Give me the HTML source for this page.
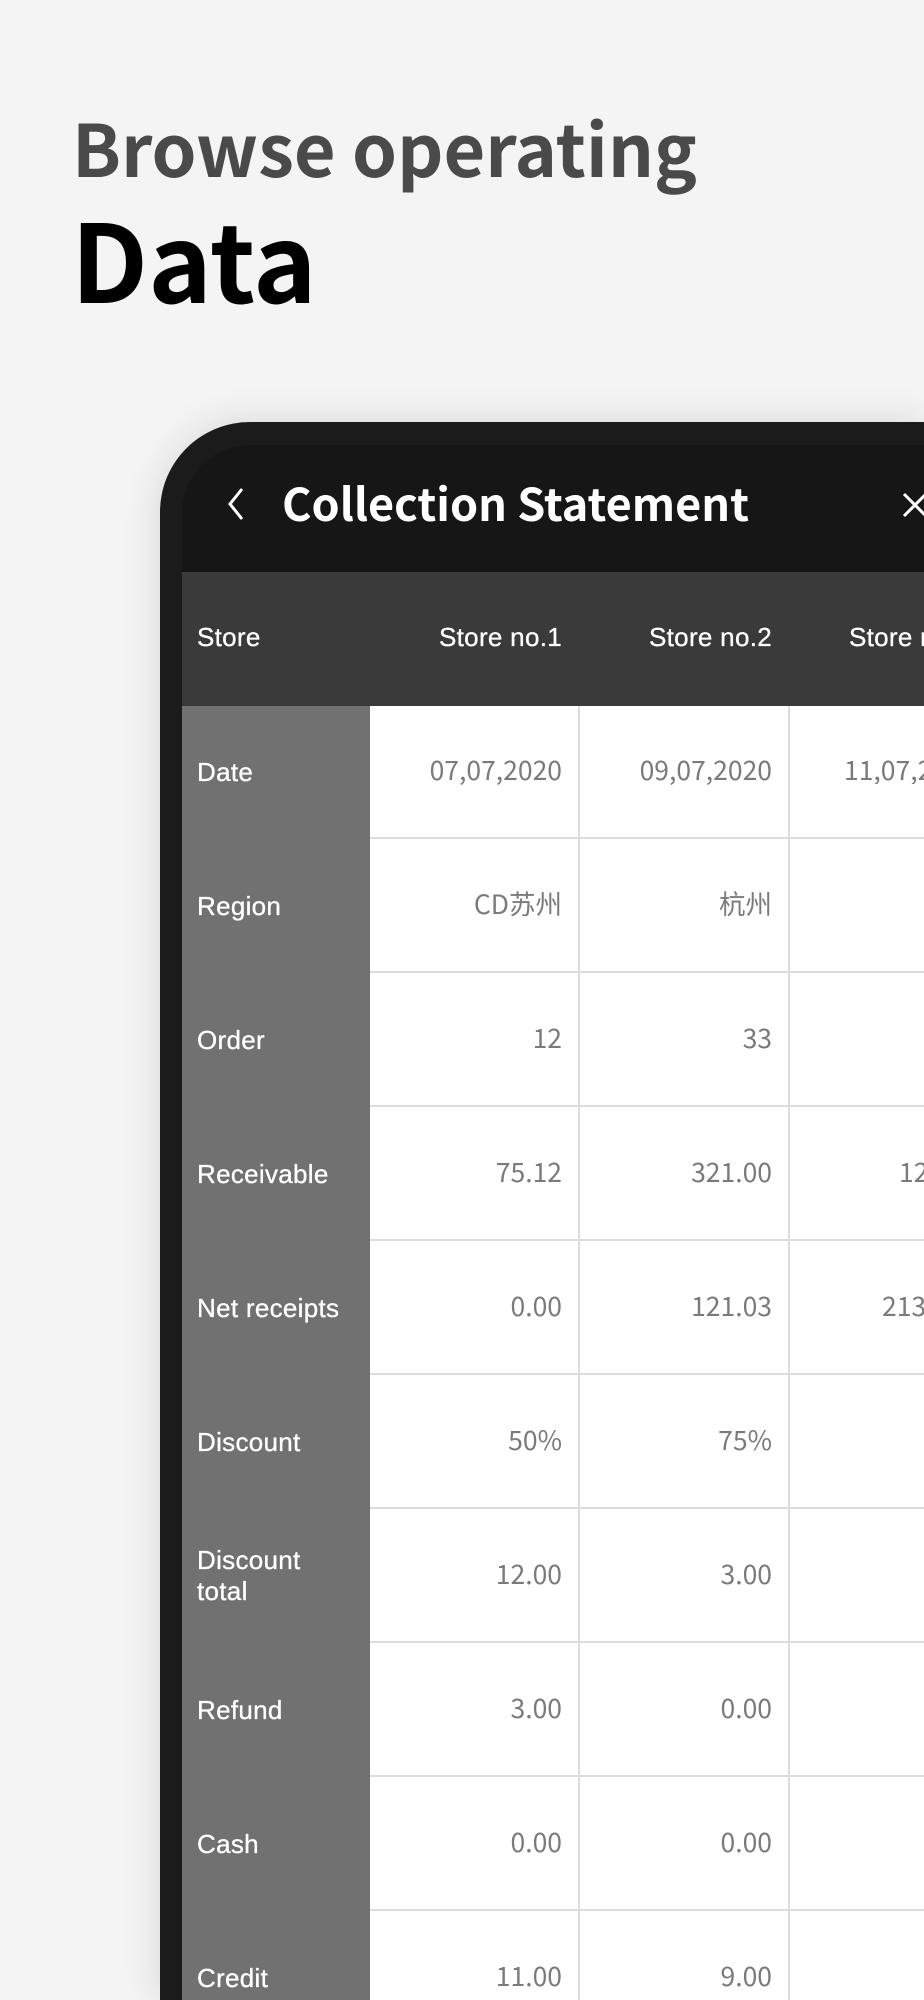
<!DOCTYPE html>
<html><head><meta charset="utf-8">
<style>
*{margin:0;padding:0;box-sizing:border-box}
html,body{width:924px;height:2000px;overflow:hidden;background:#f4f4f4;font-family:"Liberation Sans",sans-serif}
#w{position:relative;width:924px;height:2000px;overflow:hidden}
.h1{position:absolute;left:72px;top:96px;font-family:"Noto Sans CJK SC",sans-serif;font-weight:700;font-size:72px;color:#4a4a4a;line-height:100px;white-space:nowrap}
.h2{position:absolute;left:71px;top:187px;font-family:"Noto Sans CJK SC",sans-serif;font-weight:700;font-size:108px;color:#000;line-height:140px}
.frame{position:absolute;left:160px;top:422px;width:764px;height:1578px;background:#1b1b1b;border-radius:90px 0 0 0;box-shadow:0 0 40px rgba(0,0,0,0.12)}
.screen{position:absolute;left:182px;top:445px;width:742px;height:1555px;background:#161616;border-radius:68px 0 0 0}
.title{position:absolute;left:282px;top:470px;font-family:"Noto Sans CJK SC",sans-serif;font-weight:700;font-size:45px;color:#fff;line-height:64px;white-space:nowrap}
.hdr{position:absolute;left:182px;top:572px;width:742px;height:134px;background:#3a3a3a}
.lcol{position:absolute;left:182px;top:706px;width:188px;height:1294px;background:#717171}
.body{position:absolute;left:370px;top:706px;width:554px;height:1294px;background:#fff}
.vl{position:absolute;top:706px;width:2px;height:1294px;background:#dcdcdc}
.hl{position:absolute;left:370px;width:554px;height:2px;background:#dcdcdc}
.lab{position:absolute;left:197px;color:#fff;font-size:26px;letter-spacing:0.3px;line-height:31px;-webkit-text-stroke:0.3px #fff}
.hv{position:absolute;color:#fff;font-size:26px;letter-spacing:0.3px;line-height:30px;text-align:right;width:220px;white-space:nowrap;-webkit-text-stroke:0.3px #fff}
.v{position:absolute;color:#7a7a7a;font-family:"Noto Sans CJK SC",sans-serif;font-weight:400;font-size:26.5px;line-height:30px;text-align:right;width:200px;white-space:nowrap}
</style></head><body><div id="w">
<div class="h1">Browse operating</div>
<div class="h2">Data</div>
<div class="frame"></div>
<div class="screen"></div>
<svg style="position:absolute;left:222px;top:486px" width="30" height="36" viewBox="0 0 30 36"><path d="M20 3 L8 18 L20 33" fill="none" stroke="#fff" stroke-width="3"/></svg>
<div class="title">Collection Statement</div>
<svg style="position:absolute;left:900px;top:490px" width="24" height="30" viewBox="0 0 24 30"><path d="M4 4 L26 26 M26 4 L4 26" fill="none" stroke="#fff" stroke-width="3"/></svg>
<div class="hdr"></div>
<div class="lab" style="top:622px">Store</div>
<div class="hv" style="left:342px;top:622px">Store no.1</div>
<div class="hv" style="left:552px;top:622px">Store no.2</div>
<div class="hv" style="top:622px;text-align:left;left:849px;width:75px;overflow:hidden">Store no.3</div>
<div class="lcol"></div>
<div class="body"></div>
<div class="vl" style="left:578px"></div>
<div class="vl" style="left:788px"></div>
<div class="hl" style="top:837px"></div>
<div class="hl" style="top:971px"></div>
<div class="hl" style="top:1105px"></div>
<div class="hl" style="top:1239px"></div>
<div class="hl" style="top:1373px"></div>
<div class="hl" style="top:1507px"></div>
<div class="hl" style="top:1641px"></div>
<div class="hl" style="top:1775px"></div>
<div class="hl" style="top:1909px"></div>

<div class="lab" style="top:757px">Date</div>
<div class="lab" style="top:891px">Region</div>
<div class="lab" style="top:1025px">Order</div>
<div class="lab" style="top:1159px">Receivable</div>
<div class="lab" style="top:1293px">Net receipts</div>
<div class="lab" style="top:1427px">Discount</div>
<div class="lab" style="top:1545px">Discount<br>total</div>
<div class="lab" style="top:1695px">Refund</div>
<div class="lab" style="top:1829px">Cash</div>
<div class="lab" style="top:1963px">Credit</div>

<div class="v" style="left:362px;top:754px">07,07,2020</div>
<div class="v" style="left:572px;top:754px">09,07,2020</div>
<div class="v" style="left:782px;top:754px;width:142px;text-align:left;padding-left:62px;overflow:hidden">11,07,2020</div>
<div class="v" style="left:362px;top:888px">CD苏州</div>
<div class="v" style="left:572px;top:888px">杭州</div>
<div class="v" style="left:362px;top:1022px">12</div>
<div class="v" style="left:572px;top:1022px">33</div>
<div class="v" style="left:362px;top:1156px">75.12</div>
<div class="v" style="left:572px;top:1156px">321.00</div>
<div class="v" style="left:899px;top:1156px;text-align:left;width:25px;overflow:hidden">123.00</div>
<div class="v" style="left:362px;top:1290px">0.00</div>
<div class="v" style="left:572px;top:1290px">121.03</div>
<div class="v" style="left:882px;top:1290px;text-align:left;width:42px;overflow:hidden">2133.00</div>
<div class="v" style="left:362px;top:1424px">50%</div>
<div class="v" style="left:572px;top:1424px">75%</div>
<div class="v" style="left:362px;top:1558px">12.00</div>
<div class="v" style="left:572px;top:1558px">3.00</div>
<div class="v" style="left:362px;top:1692px">3.00</div>
<div class="v" style="left:572px;top:1692px">0.00</div>
<div class="v" style="left:362px;top:1826px">0.00</div>
<div class="v" style="left:572px;top:1826px">0.00</div>
<div class="v" style="left:362px;top:1960px">11.00</div>
<div class="v" style="left:572px;top:1960px">9.00</div>
</div></body></html>
